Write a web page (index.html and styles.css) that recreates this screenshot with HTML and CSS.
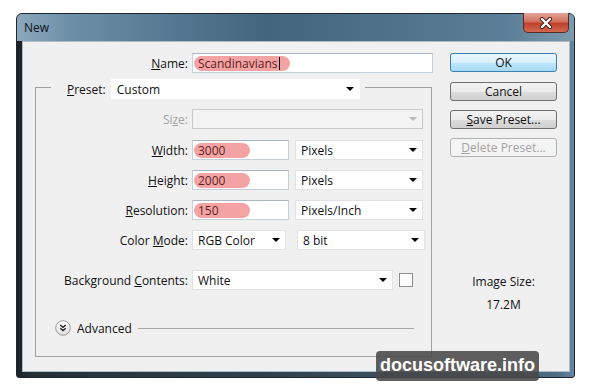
FILE: index.html
```html
<!DOCTYPE html>
<html lang="en">
<head>
    <meta charset="UTF-8">
    <meta name="viewport" content="width=device-width, initial-scale=1.0">
    <title>New</title>
    <link rel="stylesheet" href="styles.css">
</head>
<body>
    <div class="window">
        <div class="titlebar">
            <span class="title">New</span>
            <div class="close">
                <svg width="14" height="12" viewBox="0 0 14 12">
                    <path d="M3 2 L11 10 M11 2 L3 10" stroke="#3a1a1a" stroke-width="4" stroke-linecap="round"/>
                    <path d="M3 2 L11 10 M11 2 L3 10" stroke="#ffffff" stroke-width="2.4" stroke-linecap="round"/>
                </svg>
            </div>
        </div>
        <div class="client">
            <div class="form">
                <div class="row name-row">
                    <label class="lbl name-lbl"><u>N</u>ame:</label>
                    <div class="field name-field"><span class="mark mark-name">Scandinavians<span class="caret"></span></span></div>
                </div>

                <div class="group">
                    <div class="group-head">
                        <label class="head-lbl"><u>P</u>reset:</label>
                        <div class="select preset">Custom<i class="arrow"></i></div>
                    </div>

                    <div class="row">
                        <label class="lbl disabled">Si<u>z</u>e:</label>
                        <div class="select size disabled"><i class="arrow"></i></div>
                    </div>
                    <div class="row row-width">
                        <label class="lbl"><u>W</u>idth:</label>
                        <div class="field num"><span class="mark">3000</span></div>
                        <div class="select unit">Pixels<i class="arrow"></i></div>
                    </div>
                    <div class="row">
                        <label class="lbl"><u>H</u>eight:</label>
                        <div class="field num"><span class="mark">2000</span></div>
                        <div class="select unit">Pixels<i class="arrow"></i></div>
                    </div>
                    <div class="row">
                        <label class="lbl"><u>R</u>esolution:</label>
                        <div class="field num"><span class="mark">150</span></div>
                        <div class="select unit">Pixels/Inch<i class="arrow"></i></div>
                    </div>
                    <div class="row">
                        <label class="lbl">Color <u>M</u>ode:</label>
                        <div class="select mode">RGB Color<i class="arrow"></i></div>
                        <div class="select unit">8 bit<i class="arrow"></i></div>
                    </div>
                    <div class="row row-bg">
                        <label class="lbl">Background <u>C</u>ontents:</label>
                        <div class="select bgc">White<i class="arrow"></i></div>
                        <span class="check"></span>
                    </div>

                    <div class="advanced">
                        <span class="chev">
                            <svg width="16" height="16" viewBox="0 0 16 16">
                                <defs>
                                    <linearGradient id="cg" x1="0" y1="0" x2="0" y2="1">
                                        <stop offset="0" stop-color="#ffffff"/>
                                        <stop offset="1" stop-color="#dcdcdc"/>
                                    </linearGradient>
                                </defs>
                                <circle cx="8" cy="8" r="7.3" fill="url(#cg)" stroke="#9a9a9a" stroke-width="1"/>
                                <path d="M5.3 5 L8 7.4 L10.7 5 M5.3 8.2 L8 10.6 L10.7 8.2" fill="none" stroke="#222" stroke-width="1.4"/>
                            </svg>
                        </span>
                        <span class="adv-text">Advanced</span>
                        <span class="adv-line"></span>
                    </div>
                </div>
            </div>

            <div class="side">
                <div class="btn btn-ok">OK</div>
                <div class="btn">Cancel</div>
                <div class="btn"><u>S</u>ave Preset...</div>
                <div class="btn btn-off"><u>D</u>elete Preset...</div>
                <div class="img-size">Image Size:</div>
                <div class="img-value">17.2M</div>
            </div>
        </div>
    </div>

    <div class="watermark">docusoftware.info</div>
</body>
</html>
```

FILE: styles.css
```css
:root {
    --face: #f0f0f0;
    --text: #111111;
    --mark: #f3a3a3;
    --marktext: #5e1f1f;
    --grey: #a3a3a3;
}
* {
    margin: 0;
    padding: 0;
    box-sizing: border-box;
}

body {
    background-color: #ffffff;
    font-family: "Open Sans", "Noto Sans", sans-serif;
    font-size: 12px;
    color: var(--text);
    width: 591px;
    height: 391px;
    overflow: hidden;
    position: relative;
}

u {
    text-decoration: underline;
    text-underline-offset: 1px;
}

.window {
    width: 559px;
    height: 365px;
    margin: 13px 0 0 16px;
    border: 1px solid #1d262d;
    border-radius: 6px 6px 3px 3px;
    padding: 0 4px 5px 5px;
    display: flex;
    flex-direction: column;
    background: linear-gradient(90deg, #1a2228 0, #263039 3%, #33444f 50%, #4d6d83 97%, #6487a0 100%);
}

.titlebar {
    height: 27px;
    display: flex;
    justify-content: space-between;
    align-items: flex-start;
    margin: 0 -4px 0 -5px;
    padding: 0 5px 0 7px;
    border-radius: 5px 5px 0 0;
    background: linear-gradient(90deg, #8ba7bb 0%, #6b8fa7 10%, #52768f 30%, #44667d 45%, #4c7189 65%, #5b7f98 88%, #7d9bb0 100%);
}
.title {
    font-size: 12px;
    color: #101418;
    line-height: 28px;
}
.close {
    width: 46px;
    height: 20px;
    margin-top: -1px;
    border: 1px solid #5a2a26;
    border-top: none;
    border-radius: 0 0 5px 5px;
    background: linear-gradient(#e4a597 0, #d2705e 45%, #c0412c 55%, #cf6a50 100%);
    display: flex;
    justify-content: center;
    align-items: center;
}

.client {
    flex: 1;
    display: flex;
    background-color: var(--face);
    border: 1px solid #aebcc6;
    padding-top: 11px;
}

.form {
    width: 410px;
}

.row {
    display: flex;
    align-items: center;
    gap: 4px;
    height: 20px;
    margin-top: 10px;
}
.lbl {
    width: 152px;
    text-align: right;
    white-space: nowrap;
}
.lbl.disabled {
    color: var(--grey);
}
.name-row {
    margin-top: 0;
}
.name-lbl {
    width: 165px;
}
.row-width {
    margin-top: 11px;
}
.row-bg {
    margin-top: 20px;
}

.field {
    height: 20px;
    background-color: #ffffff;
    border: 1px solid #c5d0d9;
    border-top-color: #a9b6c2;
    display: flex;
    align-items: center;
    padding-left: 1px;
}
.name-field {
    width: 241px;
}
.num {
    width: 97px;
}
.mark {
    display: flex;
    align-items: center;
    height: 15px;
    min-width: 56px;
    padding: 0 4px;
    border-radius: 8px;
    background-color: var(--mark);
    color: var(--marktext);
}
.mark-name {
    padding-right: 10px;
}
.caret {
    width: 1px;
    height: 13px;
    background-color: #000000;
    margin-left: 1px;
}

.select {
    height: 20px;
    background-color: #ffffff;
    border: 1px solid #e2e2e2;
    display: flex;
    align-items: center;
    justify-content: space-between;
    padding: 0 5px 0 5px;
}
.select.disabled {
    background-color: #f3f3f3;
    border-color: #c9c9c9;
    justify-content: flex-end;
}
.select.disabled .arrow {
    border-top-color: #b9b9b9;
}
.arrow {
    width: 0;
    height: 0;
    border-left: 4px solid transparent;
    border-right: 4px solid transparent;
    border-top: 4px solid #000000;
}
.preset {
    width: 249px;
    border-color: #ffffff;
}
.size {
    width: 231px;
}
.unit {
    width: 128px;
    margin-left: 2px;
}
.mode {
    width: 94px;
    margin-right: 5px;
}
.bgc {
    width: 201px;
}
.check {
    width: 14px;
    height: 14px;
    margin-left: 2px;
    background-color: #ffffff;
    border: 1px solid #8e8f8f;
}

.group {
    width: 397px;
    margin: 14px 0 0 12px;
    border: 1px solid #a0a0a0;
    padding-bottom: 20px;
}
.group-head {
    display: flex;
    align-items: center;
    gap: 5px;
    height: 20px;
    margin: -9px 0 0 15px;
    padding: 0 5px 0 16px;
    width: max-content;
    background-color: var(--face);
}

.advanced {
    display: flex;
    align-items: center;
    height: 16px;
    margin: 30px 17px 0 19px;
}
.chev {
    display: flex;
    width: 16px;
    height: 16px;
}
.adv-text {
    margin-left: 6px;
}
.adv-line {
    flex: 1;
    height: 1px;
    margin-left: 6px;
    background-color: #a8a8a8;
}

.side {
    width: 107px;
    margin-left: 17px;
    display: flex;
    flex-direction: column;
    align-items: center;
}
.btn {
    width: 107px;
    height: 19px;
    margin-bottom: 9px;
    border: 1px solid #707070;
    border-radius: 3px;
    background: linear-gradient(#f2f2f2 0, #ebebeb 50%, #dddddd 51%, #cfcfcf 100%);
    text-align: center;
    line-height: 17px;
}
.btn-ok {
    border-color: #3c7fb1;
    background: linear-gradient(#eaf6fd 0, #d9f0fc 50%, #bee6fd 51%, #a7d9f5 100%);
    margin-bottom: 10px;
}
.btn-off {
    border-color: #adb2b5;
    background: #f4f4f4;
    color: var(--grey);
}
.img-size {
    margin-top: 108px;
    line-height: 16px;
}
.img-value {
    margin-top: 7px;
    line-height: 16px;
}

.watermark {
    position: absolute;
    left: 376px;
    top: 351px;
    width: 163px;
    height: 30px;
    border-radius: 4px;
    background-color: rgba(72, 72, 72, 0.88);
    color: #ffffff;
    font-family: "Liberation Sans", Arial, sans-serif;
    font-weight: bold;
    font-size: 18px;
    line-height: 29px;
    text-align: center;
}
```
